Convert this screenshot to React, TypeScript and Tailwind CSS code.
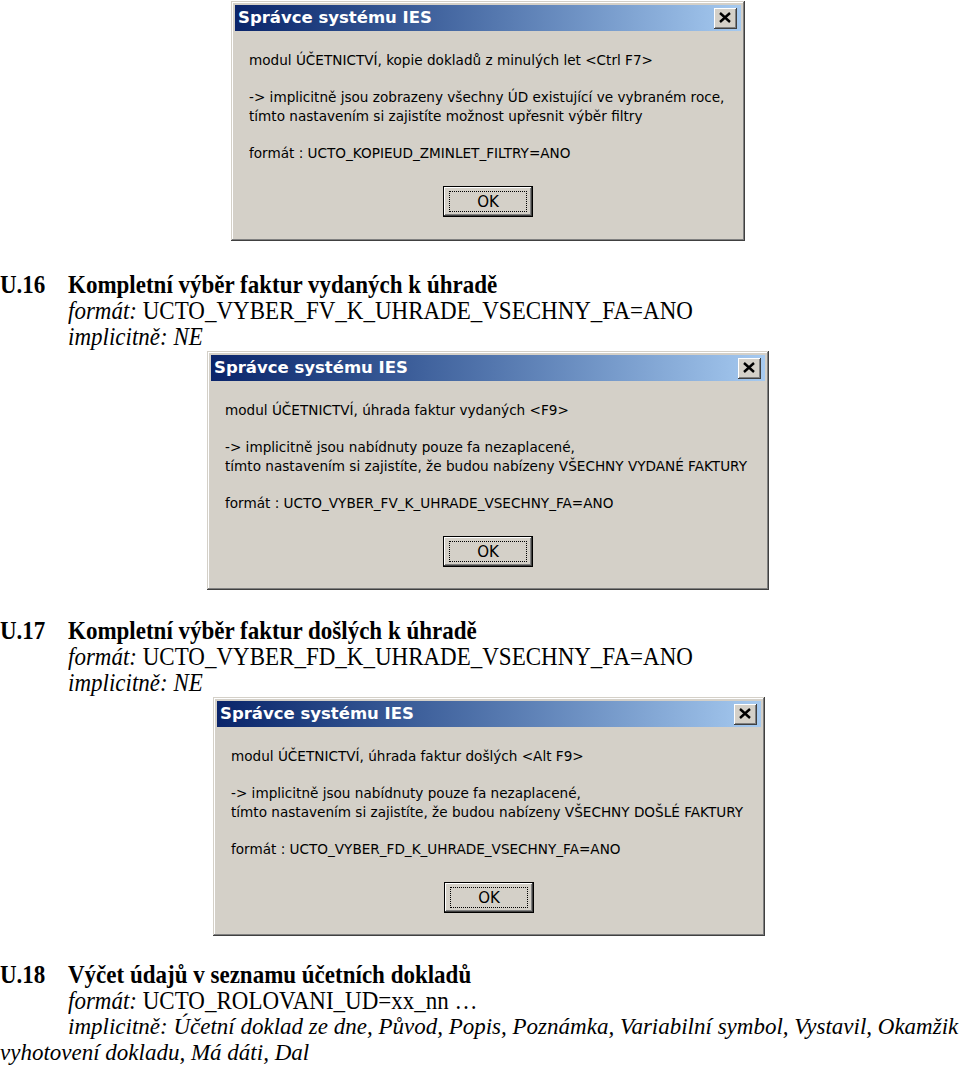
const winFont = "font-['DejaVu_Sans','Liberation_Sans',sans-serif]";

type DialogProps = {
  frame: string;
  lines: string[][];
};

function CloseButton() {
  return (
    <div className="mr-[4px] flex h-[21px] w-[23px] items-center justify-center bg-[#d4d0c8] shadow-[inset_-1px_-1px_0_#404040,inset_1px_1px_0_#ffffff,inset_-2px_-2px_0_#808080]">
      <svg width="12" height="11" viewBox="0 0 12 11" className="-mt-[1px] -ml-[1px]">
        <path d="M1 1 L11 10 M11 1 L1 10" stroke="#000" strokeWidth="2.4" />
      </svg>
    </div>
  );
}

function Dialog({ frame, lines }: DialogProps) {
  return (
    <div
      className={`${frame} flex flex-col bg-[#d4d0c8] p-[4px] shadow-[inset_-1px_-1px_0_#404040,inset_1px_1px_0_#d4d0c8,inset_-2px_-2px_0_#808080,inset_2px_2px_0_#ffffff] ${winFont}`}
    >
      <div className="flex h-[26px] items-center justify-between bg-linear-to-r from-[#0a246a] to-[#a6caf0] pl-[3px]">
        <span className="text-[16.5px] font-bold text-white">Správce systému IES</span>
        <CloseButton />
      </div>
      <div className="flex flex-col pl-[14px] pt-[20px] text-[13.6px] leading-[19px] text-black">
        {lines.map((group, i) => (
          <div key={i} className={i > 0 ? 'mt-[18px]' : ''}>
            {group.map((l) => (
              <div key={l} className="whitespace-nowrap">{l}</div>
            ))}
          </div>
        ))}
      </div>
      <div className="mt-[23px] flex justify-center">
        <div className="flex h-[31px] w-[90px] items-center justify-center border border-black bg-[#d4d0c8] shadow-[inset_-1px_-1px_0_#404040,inset_1px_1px_0_#ffffff,inset_-2px_-2px_0_#808080]">
          <div className="flex h-[21px] w-[78px] items-center justify-center border border-dotted border-black text-[15px] text-black">
            OK
          </div>
        </div>
      </div>
    </div>
  );
}

function Heading({ num, title }: { num: string; title: string }) {
  return (
    <div className="flex scale-y-[1.08] font-bold">
      <span className="w-[68px] shrink-0">{num}</span>
      <span>{title}</span>
    </div>
  );
}

export default function App() {
  return (
    <div className="w-[960px] bg-white pt-[1px] font-['Liberation_Serif',serif] text-[23px] leading-[26px] text-black">
      <Dialog
        frame="ml-[231px] w-[514px] h-[240px]"
        lines={[
          ['modul ÚČETNICTVÍ, kopie dokladů z minulých let <Ctrl F7>'],
          [
            '-> implicitně jsou zobrazeny všechny ÚD existující ve vybraném roce,',
            'tímto nastavením si zajistíte možnost upřesnit výběr filtry',
          ],
          ['formát : UCTO_KOPIEUD_ZMINLET_FILTRY=ANO'],
        ]}
      />

      <section className="mt-[31px]">
        <Heading num="U.16" title="Kompletní výběr faktur vydaných k úhradě" />
        <p className="scale-y-[1.08] pl-[68px]">
          <i>formát:</i> UCTO_VYBER_FV_K_UHRADE_VSECHNY_FA=ANO
        </p>
        <p className="scale-y-[1.08] pl-[68px] italic">implicitně: NE</p>
      </section>

      <div className="mt-[1px]">
        <Dialog
          frame="ml-[207px] w-[562px] h-[239px]"
          lines={[
            ['modul ÚČETNICTVÍ, úhrada faktur vydaných <F9>'],
            [
              '-> implicitně jsou nabídnuty pouze fa nezaplacené,',
              'tímto nastavením si zajistíte, že budou nabízeny VŠECHNY VYDANÉ FAKTURY',
            ],
            ['formát : UCTO_VYBER_FV_K_UHRADE_VSECHNY_FA=ANO'],
          ]}
        />
      </div>

      <section className="mt-[28px]">
        <Heading num="U.17" title="Kompletní výběr faktur došlých k úhradě" />
        <p className="scale-y-[1.08] pl-[68px]">
          <i>formát:</i> UCTO_VYBER_FD_K_UHRADE_VSECHNY_FA=ANO
        </p>
        <p className="scale-y-[1.08] pl-[68px] italic">implicitně: NE</p>
      </section>

      <div className="mt-[1px]">
        <Dialog
          frame="ml-[213px] w-[552px] h-[239px]"
          lines={[
            ['modul ÚČETNICTVÍ, úhrada faktur došlých <Alt F9>'],
            [
              '-> implicitně jsou nabídnuty pouze fa nezaplacené,',
              'tímto nastavením si zajistíte, že budou nabízeny VŠECHNY DOŠLÉ FAKTURY',
            ],
            ['formát : UCTO_VYBER_FD_K_UHRADE_VSECHNY_FA=ANO'],
          ]}
        />
      </div>

      <section className="mt-[26px]">
        <Heading num="U.18" title="Výčet údajů v seznamu účetních dokladů" />
        <p className="scale-y-[1.08] pl-[68px]">
          <i>formát:</i> UCTO_ROLOVANI_UD=xx_nn …
        </p>
        <p className="indent-[68px] italic">
          implicitně: Účetní doklad ze dne, Původ, Popis, Poznámka, Variabilní symbol, Vystavil, Okamžik vyhotovení
          dokladu, Má dáti, Dal
        </p>
      </section>
    </div>
  );
}
